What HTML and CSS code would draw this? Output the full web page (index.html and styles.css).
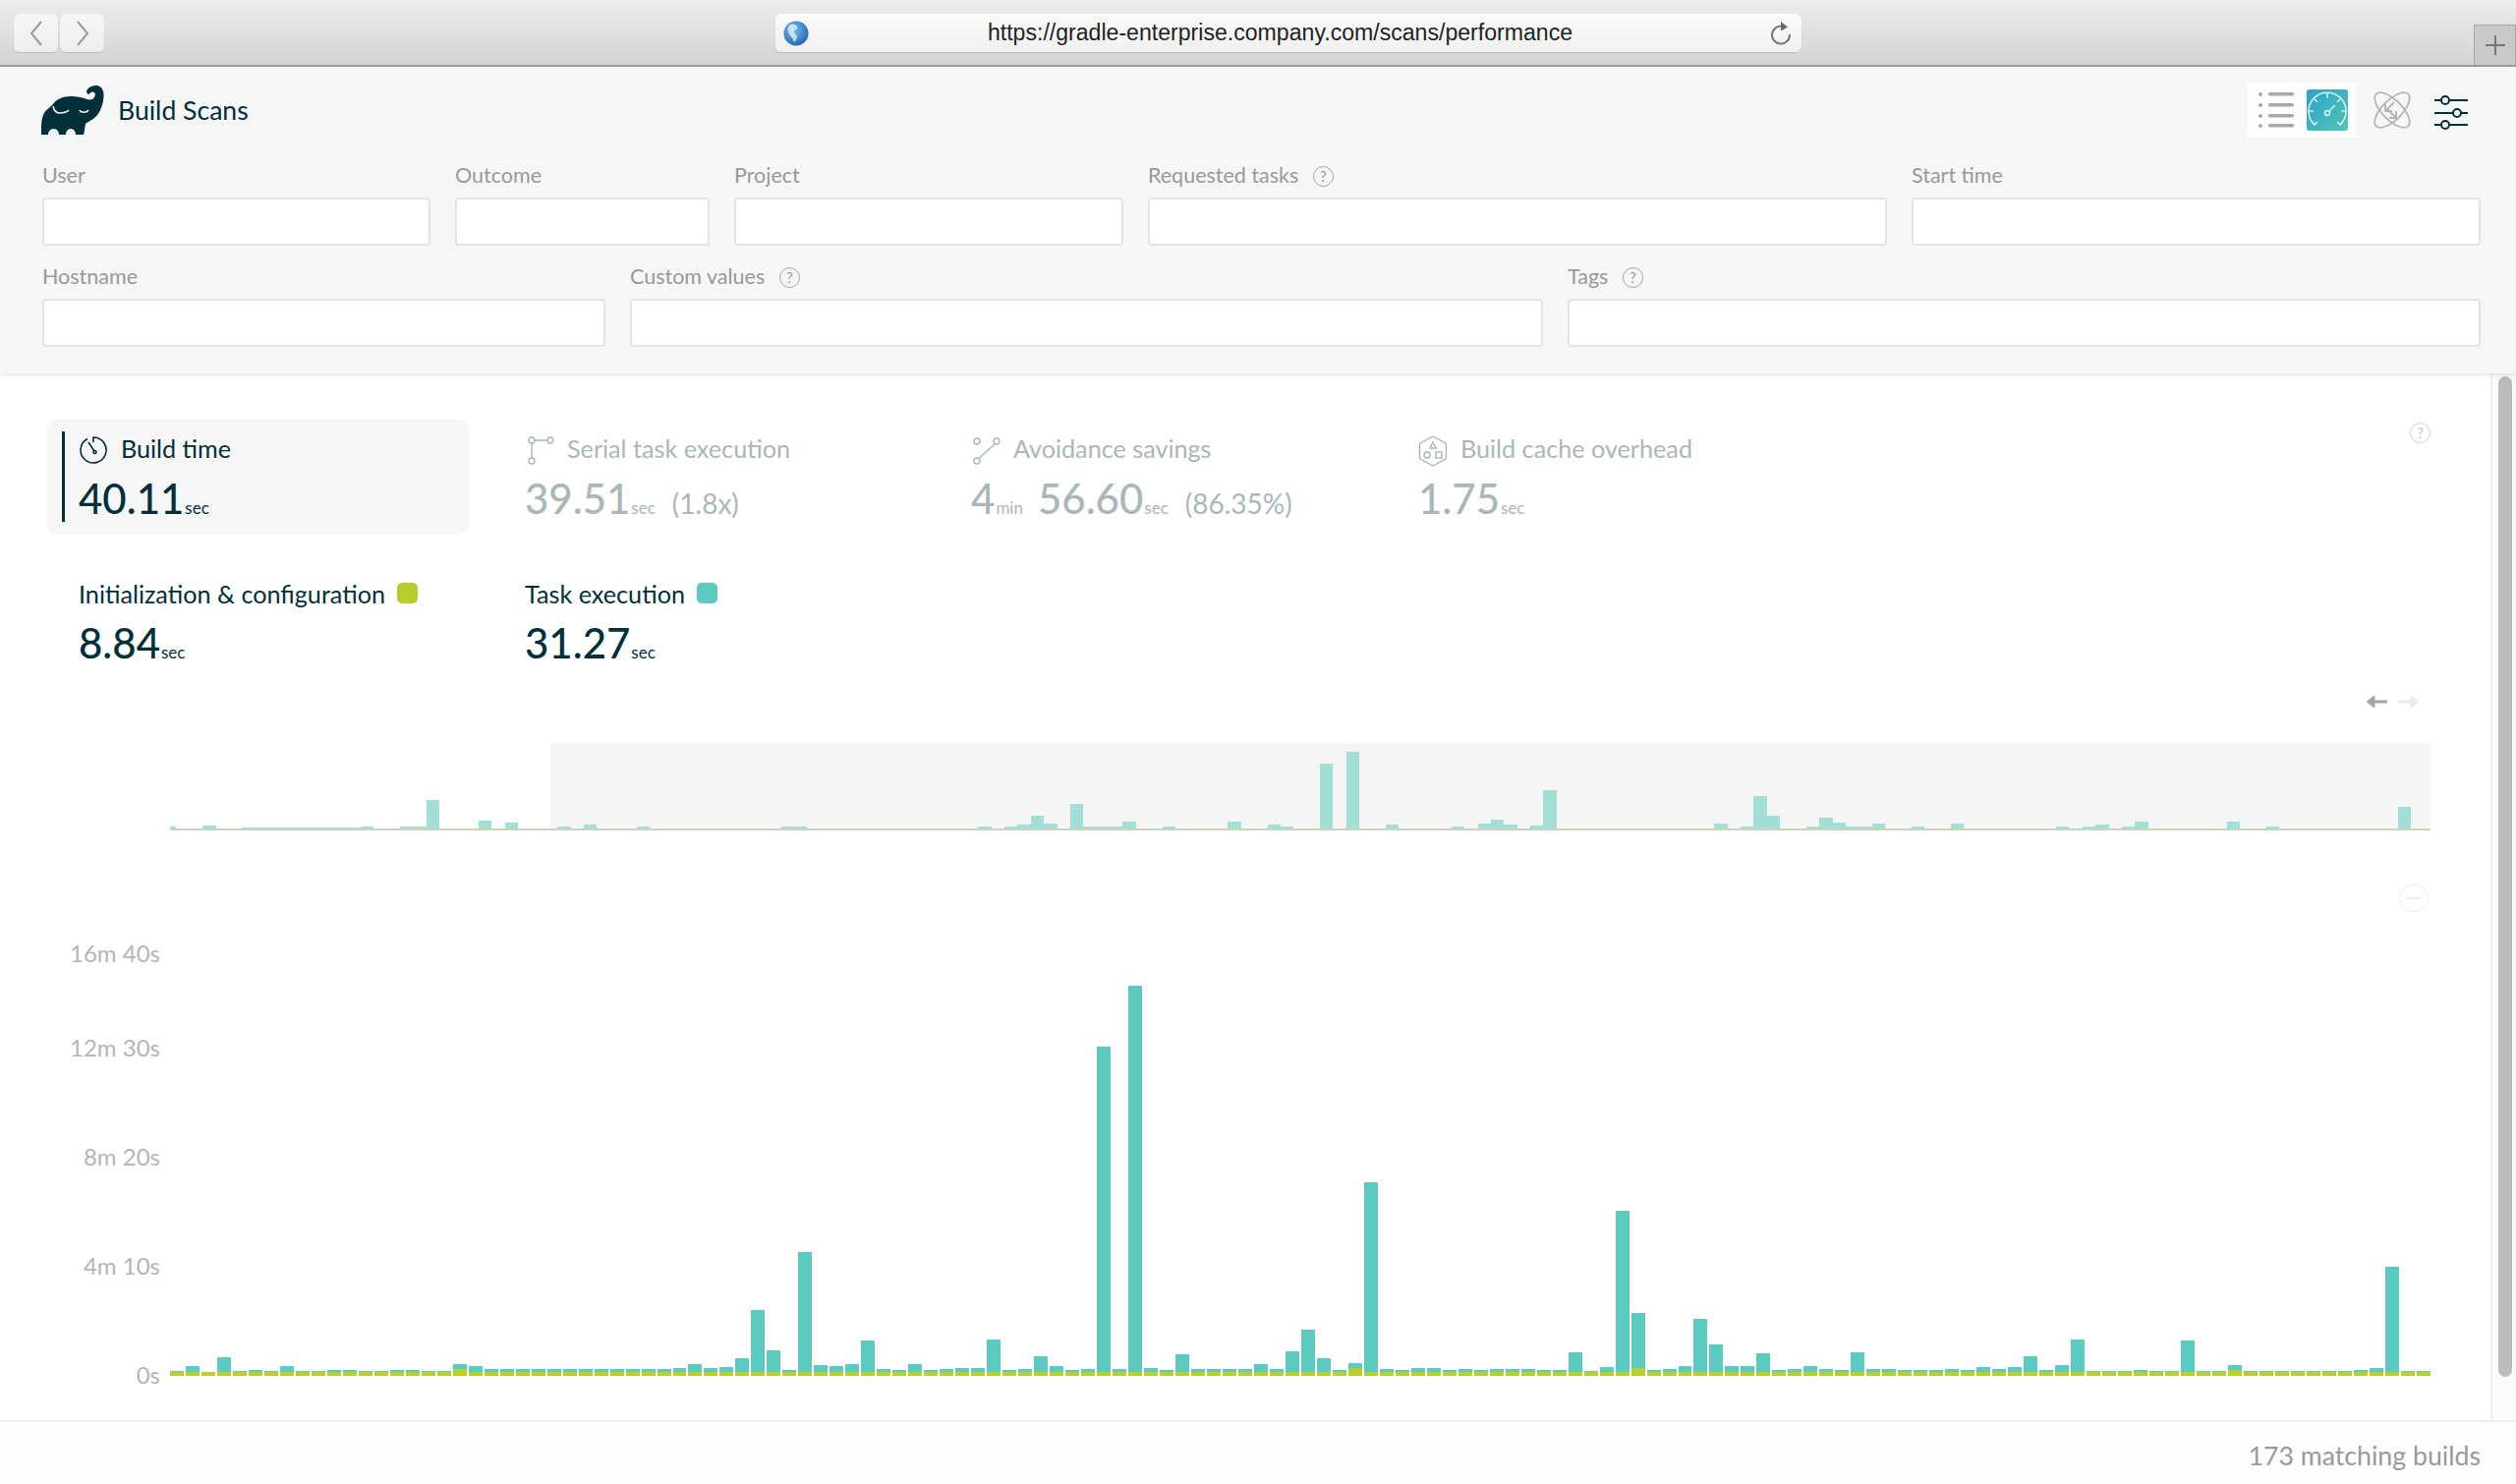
FILE: index.html
```html
<!DOCTYPE html>
<html lang="en">
<head>
    <meta charset="UTF-8">
    <meta name="viewport" content="width=device-width, initial-scale=1.0">
    <title>Build Scans</title>
    <link rel="stylesheet" href="styles.css">
</head>
<body>
    <div class="browser-bar">
        <div class="nav-buttons">
            <button class="nav-button">
                <svg width="14" height="26" viewBox="0 0 14 26"><path d="M12 1 2 13l10 12" fill="none" stroke="#9a9a9a" stroke-width="2"/></svg>
            </button>
            <button class="nav-button">
                <svg width="14" height="26" viewBox="0 0 14 26"><path d="M2 1l10 12L2 25" fill="none" stroke="#9a9a9a" stroke-width="2"/></svg>
            </button>
        </div>
        <div class="url-bar">
            <svg class="globe" width="26" height="26" viewBox="0 0 26 26">
                <defs>
                    <radialGradient id="globeBlue" cx="0.4" cy="0.35" r="0.7">
                        <stop offset="0" stop-color="#7cc0f0"/>
                        <stop offset="1" stop-color="#1c62ae"/>
                    </radialGradient>
                </defs>
                <circle cx="13" cy="13" r="12.5" fill="url(#globeBlue)"/>
                <path d="M7 4c3-1 6 0 7 2s-2 3-3 5 3 3 3 5-2 5-3 6c-1-3-2-5-4-7S3 7 7 4z" fill="#e8f3fb" opacity=".75"/>
            </svg>
            <span class="url-text">https://gradle-enterprise.company.com/scans/performance</span>
            <svg class="reload" width="22" height="26" viewBox="0 0 22 26">
                <path d="M15 6.500A9 9 0 1 0 20 14" fill="none" stroke="#777" stroke-width="2"/>
                <path d="M11 1l7 5.500-7 4z" fill="#666"/>
            </svg>
        </div>
        <div class="new-tab">
            <svg width="20" height="20" viewBox="0 0 20 20"><path d="M10 0v20M0 10h20" stroke="#777" stroke-width="2"/></svg>
        </div>
    </div>

    <section class="filters">
        <div class="filters-head">
            <div class="brand">
                <svg width="64" height="50" viewBox="0 0 64 50">
                    <path d="M46 6C47 2 52 0 56 0C61 0 64 5 63.500 11C63 18 61 25 57 30C53 35 47 37 45 39C44 43 44 47 43 50H35C35 47 33 44 30 44C27 44 25 47 25 50H18C18 47 16 44 12.500 44C9 44 7 47 7 50H0C0 44-.5 36 2 30C4 25 8 23 11 20C15 14 22 11 30 11C36 11 41 12 45 13.500C49 15 53 15 54.500 11C55.500 8 54 6 52 6.500C50 7 49 8 48.500 9C47.500 9 46 8 46 6Z" fill="#02303a"/>
                    <path d="M12 21c1 5 3 7 7 7 4 0 7-1 9-3M39 25c1 3 7 3 9 0" fill="none" stroke="#f6f6f6" stroke-width="1.500"/>
                </svg>
                <span class="brand-name">Build Scans</span>
            </div>
            <div class="view-icons">
                <div class="view-switch">
                    <svg width="36" height="40" viewBox="0 0 36 40">
                        <g fill="#a8a8a8">
                            <circle cx="2" cy="4" r="2"/><circle cx="2" cy="15" r="2"/><circle cx="2" cy="26" r="2"/><circle cx="2" cy="36" r="2"/>
                            <rect x="10" y="2" width="26" height="3.500" rx="1.500"/><rect x="10" y="13" width="26" height="3.500" rx="1.500"/>
                            <rect x="10" y="24" width="26" height="3.500" rx="1.500"/><rect x="10" y="34" width="26" height="3.500" rx="1.500"/>
                        </g>
                    </svg>
                    <div class="gauge-tile">
                        <svg width="42" height="42" viewBox="0 0 42 42" fill="none" stroke="#d3f3f1" stroke-width="1.500">
                            <path d="M8 36A19 19 0 1 1 34 36"/>
                            <path d="M21 4v5M8 10l3 3M34 10l-3 3M2 22h5M40 22h-5M5 32l3 4 3-3M37 32l-3 4-3-3"/>
                            <circle cx="21" cy="24" r="2.500"/>
                            <path d="M23 22l6-6"/>
                        </svg>
                    </div>
                </div>
                <svg class="atom" width="38" height="38" viewBox="0 0 38 38" fill="none" stroke="#b5b5b5" stroke-width="1.800">
                    <ellipse cx="19" cy="19" rx="23" ry="10" transform="rotate(45 19 19)"/>
                    <ellipse cx="19" cy="19" rx="23" ry="10" transform="rotate(-45 19 19)"/>
                    <path d="M21 11 12 20M12 13v7h7M14 18l9 9M16 27h7v-7"/>
                </svg>
                <svg width="34" height="36" viewBox="0 0 34 36" fill="none" stroke="#02303a" stroke-width="2">
                    <path d="M0 5h7M15 5h19M0 18h19M27 18h7M0 30h7M15 30h19"/>
                    <circle cx="11" cy="5" r="4"/><circle cx="23" cy="18" r="4"/><circle cx="11" cy="30" r="4"/>
                </svg>
            </div>
        </div>
        <div class="filter-row row-one">
            <div class="field"><label>User</label><input type="text"></div>
            <div class="field"><label>Outcome</label><input type="text"></div>
            <div class="field"><label>Project</label><input type="text"></div>
            <div class="field">
                <label>Requested tasks <span class="help">?</span></label>
                <input type="text">
            </div>
            <div class="field"><label>Start time</label><input type="text"></div>
        </div>
        <div class="filter-row row-two">
            <div class="field"><label>Hostname</label><input type="text"></div>
            <div class="field">
                <label>Custom values <span class="help">?</span></label>
                <input type="text">
            </div>
            <div class="field">
                <label>Tags <span class="help">?</span></label>
                <input type="text">
            </div>
        </div>
    </section>

    <div class="content">
        <main class="main">
            <div class="stats">
                <div class="stat-card">
                    <div class="stat-inner">
                        <div class="stat-label">
                            <svg width="30" height="30" viewBox="0 0 30 30" fill="none" stroke="currentColor" stroke-width="1.600">
                                <path d="M9 3.500A13 13 0 1 0 15 2v5"/>
                                <path d="M10 7l6 9"/><circle cx="16.500" cy="17" r="1.500"/>
                            </svg>
                            Build time
                        </div>
                        <div class="stat-value">40.11<small>sec</small></div>
                    </div>
                </div>
                <div class="stat muted serial">
                    <div class="stat-label">
                        <svg width="30" height="30" viewBox="0 0 30 30" fill="none" stroke="currentColor" stroke-width="1.400">
                            <circle cx="7" cy="5" r="3"/><circle cx="26" cy="5" r="3"/><circle cx="7" cy="26" r="3"/>
                            <path d="M10 5h13M7 8v15"/>
                        </svg>
                        Serial task execution
                    </div>
                    <div class="stat-value">39.51<small>sec</small><span class="extra">(1.8x)</span></div>
                </div>
                <div class="stat muted avoidance">
                    <div class="stat-label">
                        <svg width="30" height="30" viewBox="0 0 30 30" fill="none" stroke="currentColor" stroke-width="1.400">
                            <circle cx="6" cy="6" r="3"/><circle cx="26" cy="6" r="3"/><circle cx="6" cy="26" r="3"/>
                            <path d="M8 23.500 24.500 8.500"/>
                        </svg>
                        Avoidance savings
                    </div>
                    <div class="stat-value">4<small>min</small><span class="next-unit">56.60</span><small>sec</small><span class="extra">(86.35%)</span></div>
                </div>
                <div class="stat muted cache">
                    <div class="stat-label">
                        <svg width="30" height="32" viewBox="0 0 30 32" fill="none" stroke="currentColor" stroke-width="1.400">
                            <path d="M15 1l13.500 7.500v15L15 31 1.500 23.500v-15z"/>
                            <path d="M15 7l3 6h-6z"/><circle cx="9" cy="20" r="3"/><rect x="18" y="17" width="6" height="6"/>
                        </svg>
                        Build cache overhead
                    </div>
                    <div class="stat-value">1.75<small>sec</small></div>
                </div>
                <span class="help help-light stats-help">?</span>
            </div>

            <div class="breakdown">
                <div class="breakdown-item">
                    <div class="stat-label">Initialization &amp; configuration <i class="swatch lime"></i></div>
                    <div class="stat-value">8.84<small>sec</small></div>
                </div>
                <div class="breakdown-item">
                    <div class="stat-label">Task execution <i class="swatch teal"></i></div>
                    <div class="stat-value">31.27<small>sec</small></div>
                </div>
            </div>

            <div class="pager">
                <svg width="22" height="12" viewBox="0 0 22 12"><path d="M22 6H5M8 2 3 6l5 4z" fill="#a5a5a5" stroke="#a5a5a5" stroke-width="3"/></svg>
                <svg width="22" height="12" viewBox="0 0 22 12"><path d="M0 6h17M14 2l5 4-5 4z" fill="#e9e9e9" stroke="#e9e9e9" stroke-width="3"/></svg>
            </div>

            <div class="overview" id="overview"></div>

            <div class="zoom-row">
                <div class="zoom-out"><span></span></div>
            </div>

            <div class="chart">
                <div class="y-axis">
                    <span>16m 40s</span>
                    <span>12m 30s</span>
                    <span>8m 20s</span>
                    <span>4m 10s</span>
                    <span>0s</span>
                </div>
                <div class="bars" id="bars"></div>
            </div>
        </main>
        <div class="scrollbar"><div class="thumb"></div></div>
    </div>

    <footer class="footer">173 matching builds</footer>

    <script src="script.js"></script>
</body>
</html>
```

FILE: styles.css
```css
* {
    box-sizing: border-box;
}
body {
    font-family: Lato, "Open Sans", sans-serif;
    margin: 0;
    width: 2560px;
    height: 1510px;
    overflow: hidden;
    background-color: white;
    color: #02303a;
}

/* browser chrome */
.browser-bar {
    height: 68px;
    display: flex;
    align-items: flex-start;
    padding: 14px 0 0 14px;
    background: linear-gradient(#ececec, #d3d3d3);
    border-bottom: 2px solid #9b9b9b;
}
.nav-buttons {
    display: flex;
    gap: 2px;
}
.nav-button {
    width: 45px;
    height: 39px;
    padding: 0;
    display: flex;
    align-items: center;
    justify-content: center;
    border: none;
    border-radius: 6px;
    background: linear-gradient(#f6f6f6, #ededed);
    box-shadow: 0 1px 1px #bbb;
}
.url-bar {
    width: 1045px;
    height: 39px;
    margin-left: 683px;
    display: flex;
    align-items: center;
    padding: 0 10px 0 8px;
    border-radius: 6px;
    background: linear-gradient(#fbfbfb, #f0f0f0);
    box-shadow: 0 1px 1px #bbb;
}
.url-text {
    flex: 1;
    text-align: center;
    font-family: "Liberation Sans", Arial, sans-serif;
    font-size: 23.1px;
    color: #222;
    padding-right: 19px;
}
.new-tab {
    width: 43px;
    height: 41px;
    margin: 11px 0 0 684px;
    display: flex;
    align-items: center;
    justify-content: center;
    background-color: #c9c9c9;
    border: 1px solid #a8a8a8;
    border-bottom: none;
    flex: none;
}

/* filter panel */
.filters {
    height: 312px;
    padding: 19px 36px 0 43px;
    background-color: #f6f6f6;
    box-shadow: 0 2px 4px rgba(0, 0, 0, 0.1);
    position: relative;
}
.filters-head {
    height: 77px;
    display: flex;
    justify-content: space-between;
    align-items: flex-start;
}
.brand {
    display: flex;
    align-items: center;
    height: 50px;
    margin-left: -1px;
}
.brand-name {
    margin-left: 14px;
    font-size: 26.6px;
}
.view-icons {
    display: flex;
    align-items: flex-start;
    margin-top: -3px;
    margin-right: 13px;
}
.view-switch {
    width: 110px;
    height: 56px;
    display: flex;
    gap: 13px;
    align-items: center;
    padding-left: 11px;
    background-color: #fefefe;
}
.gauge-tile {
    width: 42px;
    height: 42px;
    border-radius: 3px;
    background: linear-gradient(135deg, #2ba3cb, #52c3b4);
}
.atom {
    margin: 9px 24px 0 18px;
    overflow: visible;
}
.view-icons > svg:last-child {
    margin-top: 13px;
}
.filter-row {
    display: grid;
    column-gap: 25px;
    margin-bottom: 17px;
}
.row-one {
    grid-template-columns: 395px 259px 396px 752px 579px;
}
.row-two {
    grid-template-columns: 573px 929px 929px;
}
.field label {
    display: block;
    height: 37px;
    line-height: 28px;
    font-size: 21.5px;
    color: #999;
}
.field input {
    display: block;
    width: 100%;
    height: 49px;
    border: 2px solid #e3e3e3;
    border-radius: 4px;
    background-color: white;
}
.help {
    display: inline-block;
    width: 21px;
    height: 21px;
    margin-left: 9px;
    border: 1.5px solid #a5a5a5;
    border-radius: 50%;
    font-size: 15px;
    line-height: 18px;
    text-align: center;
    vertical-align: 1px;
    color: #999;
}
.help-light {
    border-color: #cfcfcf;
    color: #c4c4c4;
}

/* main area */
.content {
    height: 1065px;
    display: flex;
}
.main {
    width: 2534px;
    padding-top: 47px;
}
.scrollbar {
    width: 26px;
    padding: 3px 6px 0;
    background-color: #fafafa;
    border-left: 2px solid #efefef;
}
.thumb {
    width: 14px;
    height: 1018px;
    border-radius: 7px;
    background-color: #bcbcbc;
}
.stats {
    display: flex;
    height: 117px;
    margin-left: 48px;
}
.stat-card {
    width: 429px;
    height: 117px;
    margin-right: 57px;
    padding: 12px 0 13px 15px;
    border-radius: 10px;
    background-color: #f6f6f6;
}
.stat-inner {
    height: 92px;
    padding: 4px 0 0 14px;
    border-left: 3px solid #02303a;
}
.stat {
    padding-top: 16px;
}
.serial {
    width: 454px;
}
.avoidance {
    width: 455px;
}
.cache {
    width: 400px;
}
.muted {
    color: #a9b7b7;
}
.stats-help {
    margin: 3px 0 0 609px;
    flex: none;
}
.stat-label {
    display: flex;
    align-items: flex-start;
    gap: 13px;
    height: 30px;
    font-size: 25.2px;
    line-height: 26px;
    white-space: nowrap;
}
.stat-value {
    margin-top: 9px;
    font-size: 42px;
    font-weight: 500;
    line-height: 50px;
    white-space: nowrap;
}
.stat-value small {
    font-size: 17px;
    font-weight: 400;
    margin-left: 1px;
}
.extra {
    font-size: 28px;
    font-weight: 400;
    margin-left: 17px;
}
.next-unit {
    margin-left: 15px;
}
.breakdown {
    display: flex;
    margin: 46px 0 0 80px;
    height: 90px;
}
.breakdown-item {
    width: 454px;
}
.breakdown-item .stat-label {
    line-height: 28px;
}
.swatch {
    display: inline-block;
    width: 21px;
    height: 21px;
    margin: 3px 0 0 -1px;
    border-radius: 5px;
}
.lime {
    background-color: #b9cc2e;
}
.teal {
    background-color: #5bcabf;
}
.pager {
    display: flex;
    justify-content: flex-end;
    gap: 11px;
    height: 14px;
    margin: 28px 72px 0 0;
}
.overview {
    width: 2300px;
    height: 89px;
    margin: 34px 0 0 173px;
    display: flex;
    align-items: flex-end;
    overflow: hidden;
    background: linear-gradient(to right, transparent 387px, #f5f5f5 387px);
    border-bottom: 2px solid #c9d4b8;
}
.ov-bar {
    flex: none;
    width: 13.38px;
    background-color: #a1dfd7;
}
.ov-bar:first-child {
    margin-left: -7px;
}
.zoom-row {
    display: flex;
    justify-content: flex-end;
    height: 28px;
    margin: 55px 63px 0 0;
}
.zoom-out {
    width: 30px;
    height: 28px;
    display: flex;
    align-items: center;
    justify-content: center;
    border: 1.5px solid #eee;
    border-radius: 50%;
}
.zoom-out span {
    width: 18px;
    height: 1.5px;
    background-color: #eee;
}
.chart {
    display: flex;
    margin-top: 27px;
}
.y-axis {
    width: 163px;
    height: 445px;
    margin-right: 10px;
    display: grid;
    grid-template-rows: 96px 111px 111px 111px 16px;
    justify-items: end;
    font-size: 24px;
    line-height: 30px;
    color: #b5b5b5;
}
.bars {
    width: 2300px;
    height: 445px;
    display: flex;
    gap: 2px;
    align-items: flex-end;
}
.bar {
    flex: 1;
    display: flex;
    flex-direction: column;
}
.bar-task {
    background-color: #5bcabf;
}
.bar-init {
    background-color: #b9cf2e;
}
.footer {
    height: 65px;
    padding-right: 36px;
    text-align: right;
    font-size: 26.7px;
    line-height: 68px;
    color: #999;
    background-color: #fefefe;
    border-top: 2px solid #efefef;
}
```

FILE: script.js
```js
// Total bar height in px for the 144 builds in the selected range
const builds = [
    5, 10, 4.5, 19, 5.5, 6.5, 5.5, 10, 5.5, 5, 6.5, 6.5, 5.5, 5.5, 6.5, 6, 5.5, 5.5, 12, 10.5,
    7.5, 7.5, 7.5, 7.5, 7.5, 7.5, 7.5, 7.5, 7.5, 7, 7, 7, 8, 12, 8, 9.5, 18, 67, 26, 6,
    126, 11, 10, 12, 36, 7, 6.5, 12.5, 6.5, 7, 8, 8, 37, 6, 7, 20.5, 10.5, 6, 7, 335,
    7, 397, 8.5, 6.5, 22.5, 7, 7, 7, 7, 12, 7, 25, 47, 18, 6, 13, 197, 7, 6, 8,
    8, 6, 7, 6, 7, 7, 7, 6, 6, 24, 5, 9, 168, 64, 6, 7, 10, 58, 32, 10,
    10, 23, 6, 7, 10.5, 7, 6.5, 24, 7, 7, 5.7, 5.7, 6, 7, 5.7, 9, 7, 9, 20, 6,
    11, 37, 5, 5, 5, 6, 5, 5, 36, 5, 5, 11, 5, 5.5, 5.5, 5, 5, 5.5, 5, 6,
    8, 111, 5.5, 5.5
];

// Builds with a longer configuration phase
const initHeights = { 18: 7.5, 75: 8, 93: 8, 131: 6 };

// Older builds shown only in the overview, left of the selected range
const olderBuilds = [
    2, 0, 0, 3.5, 0, 0, 1, 1, 1, 1, 1, 1, 1, 1, 1, 2, 0, 0, 2, 2, 29, 0, 0, 0, 8, 0, 6, 0, 0
];

function renderBars() {
    const container = document.getElementById('bars');
    builds.forEach((height, index) => {
        const initHeight = initHeights[index] || 4.5;
        const bar = document.createElement('div');
        bar.className = 'bar';
        const task = document.createElement('div');
        task.className = 'bar-task';
        task.style.height = Math.max(height - initHeight, 0) + 'px';
        const init = document.createElement('div');
        init.className = 'bar-init';
        init.style.height = initHeight + 'px';
        bar.appendChild(task);
        bar.appendChild(init);
        container.appendChild(bar);
    });
}

function renderOverview() {
    const container = document.getElementById('overview');
    const recent = builds.map(height => (height < 9 ? 0 : height * 0.197));
    olderBuilds.concat(recent).forEach(height => {
        const bar = document.createElement('div');
        bar.className = 'ov-bar';
        bar.style.height = height + 'px';
        container.appendChild(bar);
    });
}

renderBars();
renderOverview();
```
